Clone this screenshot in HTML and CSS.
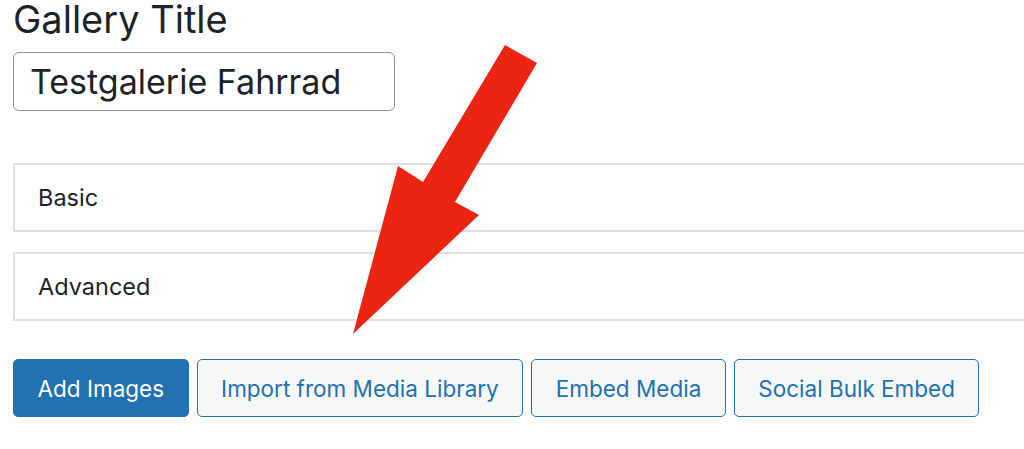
FILE: index.html
```html
<!DOCTYPE html>
<html lang="en">
<head>
  <meta charset="UTF-8">
  <meta name="viewport" content="width=device-width, initial-scale=1.0">
  <title>Gallery</title>
  <link rel="stylesheet" href="styles.css">
</head>
<body>
  <div class="page">
    <h1 class="galleryTitle">Gallery Title</h1>
    <input type="text" class="titleInput" value="Testgalerie Fahrrad">

    <div class="panels">
      <div class="panel">Basic</div>
      <div class="panel">Advanced</div>
    </div>

    <div class="actions">
      <button class="btn btnPrimary">Add Images</button>
      <button class="btn">Import from Media Library</button>
      <button class="btn">Embed Media</button>
      <button class="btn">Social Bulk Embed</button>
    </div>

    <svg class="arrow" width="1024" height="449" viewBox="0 0 1024 449">
      <polygon points="505,45 537,63 455,202 479,215 353,334 398,166 423,182" fill="#ec2412"/>
    </svg>
  </div>
</body>
</html>
```

FILE: styles.css
```css
body {
  margin: 0;
  background: #fff;
  overflow: hidden;
}
.page {
  position: relative;
  padding-left: 13px;
  font-family: 'Inter', 'Noto Sans', sans-serif;
  color: #1d2327;
}
.galleryTitle {
  margin: 0;
  padding-top: 2px;
  font-size: 38px;
  font-weight: 400;
  line-height: 34px;
}
.titleInput {
  display: block;
  box-sizing: border-box;
  margin-top: 16px;
  width: 382px;
  height: 59px;
  padding: 0 16px;
  border: 1px solid #8c8f94;
  border-radius: 6px;
  font-family: inherit;
  font-size: 34px;
  color: #1d2327;
  background: #fff;
}
.panels {
  display: flex;
  flex-direction: column;
  gap: 20px;
  margin-top: 52px;
  margin-right: -20px;
}
.panel {
  box-sizing: border-box;
  height: 69px;
  display: flex;
  align-items: center;
  padding-left: 23px;
  border: 2px solid #e0e0e2;
  font-size: 23.5px;
}
.actions {
  display: flex;
  gap: 8px;
  margin-top: 38px;
}
.btn {
  box-sizing: border-box;
  height: 58px;
  padding: 0 23.5px;
  border: 1.5px solid #2271b1;
  border-radius: 5px;
  background: #f6f7f7;
  color: #2271b1;
  font-family: inherit;
  font-size: 22.5px;
}
.btnPrimary {
  background: #2271b1;
  color: #fff;
}
.arrow {
  position: absolute;
  left: 0;
  top: 0;
  pointer-events: none;
}
```
